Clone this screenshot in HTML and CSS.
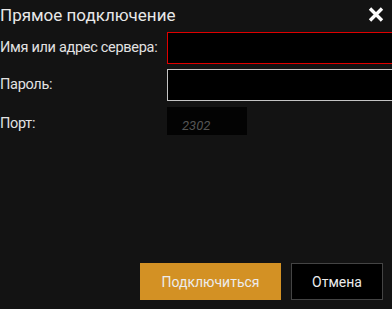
FILE: index.html
```html
<!DOCTYPE html>
<html lang="ru">
<head>
<meta charset="utf-8">
<link rel="stylesheet" href="styles.css">
</head>
<body>
<div class="dialog">
  <header class="head">
    <h1 class="title">Прямое подключение</h1>
    <button class="close" aria-label="Закрыть">
      <svg width="16" height="15" viewBox="0 0 16 15"><path d="M2 1.5 L14 13.5 M14 1.5 L2 13.5" stroke="#fff" stroke-width="3.4" stroke-linecap="butt"/></svg>
    </button>
  </header>
  <div class="form">
    <label class="label">Имя или адрес сервера:</label>
    <div class="field field-error"></div>
    <label class="label">Пароль:</label>
    <div class="field"></div>
    <label class="label label-port">Порт:</label>
    <div class="port">2302</div>
  </div>
  <footer class="foot">
    <button class="btn btn-primary">Подключиться</button>
    <button class="btn btn-cancel">Отмена</button>
  </footer>
</div>
</body>
</html>
```
FILE: styles.css
```css
html, body {
  margin: 0;
  padding: 0;
  background: #131313;
  overflow: hidden;
}
body {
  font-family: Roboto, "Liberation Sans", sans-serif;
  color: #e6e6e6;
}
.dialog {
  width: 392px;
  height: 309px;
  display: flex;
  flex-direction: column;
}
.head {
  height: 32px;
  display: flex;
  align-items: flex-start;
  justify-content: space-between;
}
.title {
  margin: 0;
  padding-top: 1px;
  font-size: 17px;
  font-weight: 400;
  line-height: 28px;
  color: #e8e8e8;
}
.close {
  margin: 7px 8px 0 0;
  padding: 0;
  border: 0;
  background: none;
  width: 16px;
  height: 15px;
  display: block;
}
.close svg { display: block; }
.form {
  display: grid;
  grid-template-columns: 167px 240px;
  grid-auto-rows: 32px;
  row-gap: 5px;
}
.label {
  font-size: 14.5px;
  line-height: 16px;
  align-self: center;
  color: #e2e2e2;
  letter-spacing: -0.3px;
}
.label-port {
  padding-top: 4px;
}
.field {
  box-sizing: border-box;
  background: #000;
  border: 1px solid #c4c4c4;
  height: 32px;
}
.field-error {
  border-color: #e00000;
}
.port {
  box-sizing: border-box;
  margin-top: 1px;
  width: 80px;
  height: 28px;
  background: #030303;
  color: #555;
  font-style: italic;
  font-size: 13px;
  padding: 11px 0 0 15px;
  line-height: 15px;
}
.foot {
  margin-top: auto;
  padding: 0 9px 9px 0;
  display: flex;
  justify-content: flex-end;
  gap: 10px;
}
.btn {
  height: 37px;
  font-family: Roboto, "Liberation Sans", sans-serif;
  font-size: 14px;
  color: #ececec;
  padding: 0;
  cursor: pointer;
}
.btn-primary {
  width: 141px;
  background: #d39124;
  border: 0;
}
.btn-cancel {
  width: 92px;
  background: #000;
  border: 1px solid #444;
}
```
